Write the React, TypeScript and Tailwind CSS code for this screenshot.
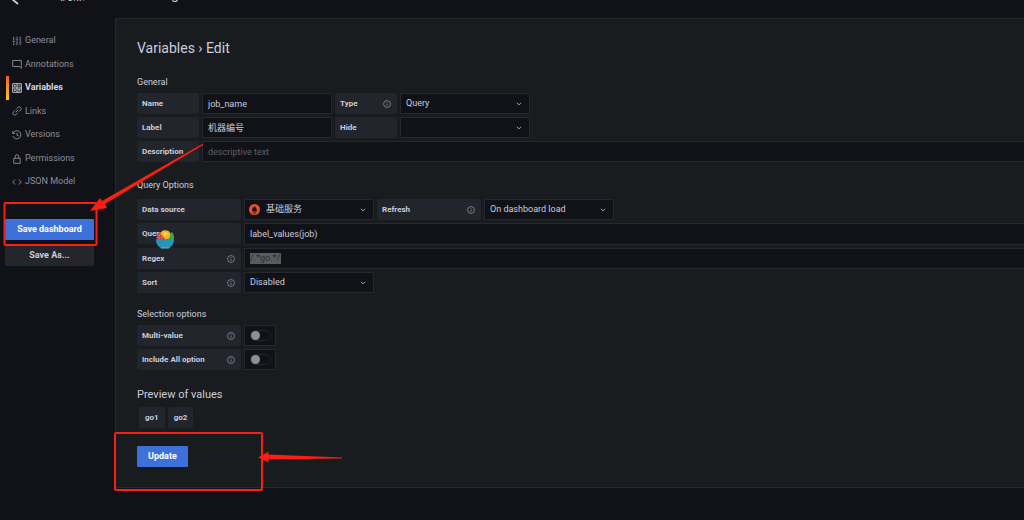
import React, { useId, useState } from "react";

function Info() {
  return (
    <svg viewBox="0 0 10 10" className="size-2 shrink-0" fill="none" stroke="#8e8e99" strokeWidth="1">
      <circle cx="5" cy="5" r="4.3" />
      <path d="M5 4.4v3M5 2.5v1" />
    </svg>
  );
}

function Label({ text, htmlFor, info = false, wide = false }: { text: string; htmlFor: string; info?: boolean; wide?: boolean }) {
  return (
    <label
      htmlFor={htmlFor}
      className={`flex h-[21px] shrink-0 items-center justify-between rounded-[2px] bg-[#22252b] pr-[6px] pl-[5px] text-[8px] font-bold whitespace-nowrap text-[#ccccdc] ${wide ? "w-[104px]" : "w-[62px]"}`}
    >
      {text}
      {info && <Info />}
    </label>
  );
}

function TextRow({ label, value, placeholder, info, wide, full, selected, tall }: {
  label: string; value?: string; placeholder?: string; info?: boolean; wide?: boolean; full?: boolean; selected?: boolean; tall?: boolean;
}) {
  const id = useId();
  return (
    <div className={`flex gap-[3px] ${full ? "min-w-0 flex-1" : ""}`}>
      <Label text={label} htmlFor={id} info={info} wide={wide} />
      {selected ? (
        <div className="flex h-[21px] min-w-0 flex-1 items-center border border-r-0 border-[#26282d] bg-[#111217] px-[5px]">
          <input id={id} defaultValue={value} className="h-[11px] w-[31px] bg-[#5b5b5b] text-[9px] text-[#2d2e30] outline-none" />
        </div>
      ) : (
        <input
          id={id}
          defaultValue={value}
          placeholder={placeholder}
          className={`border border-[#26282d] bg-[#111217] px-[5px] text-[9px] text-[#ccccdc] outline-none placeholder:text-[#5f6067] ${full ? "min-w-0 flex-1 border-r-0" : "w-[130px] rounded-[1px]"} ${tall ? "h-[22px]" : "h-[21px]"}`}
        />
      )}
    </div>
  );
}

function Flame() {
  return (
    <svg viewBox="0 0 22 22" className="pointer-events-none absolute top-[5px] left-[5px] size-[11px]">
      <circle cx="11" cy="11" r="11" fill="#e6522c" />
      <path fill="#15161a" d="M11 2.5c.8 1.8 0 3 1 4.500 1-.8.8-1.600.8-2.200 1.600 2 1.400 3.600 2.500 5.200.7 1.200.4 2.700-.3 4H7c-.8-1.400-1-2.600-.4-4 .8-1.400.6-2.700 1.200-4 .2 1 .4 1.700 1 2.200C9.800 6.400 9.800 4.300 11 2.500zM6.500 15h9v1.400h-9zM8 17.400h6c-.5 1.400-1.500 2-3 2s-2.500-.6-3-2z" />
    </svg>
  );
}

function SelectRow({ label, value, info, wide, icon }: { label: string; value: string; info?: boolean; wide?: boolean; icon?: boolean }) {
  const id = useId();
  return (
    <div className="flex gap-[3px]">
      <Label text={label} htmlFor={id} info={info} wide={wide} />
      <div className="relative">
        <select
          id={id}
          defaultValue={value}
          className={`block h-[21px] w-[130px] appearance-none rounded-[1px] border border-[#26282d] bg-[#111217] pr-5 text-[9px] text-[#ccccdc] outline-none ${icon ? "pl-[21px]" : "pl-[5px]"}`}
        >
          <option value={value}>{value}</option>
        </select>
        {icon && <Flame />}
        <svg viewBox="0 0 6 4" className="pointer-events-none absolute top-[9px] right-[8px] h-1 w-1.5" fill="none" stroke="#a0a0ac">
          <path d="M.8.8 3 2.800 5.200.8" />
        </svg>
      </div>
    </div>
  );
}

function Toggle({ label }: { label: string }) {
  const id = useId();
  const [on, setOn] = useState(false);
  return (
    <div className="flex gap-[3px]">
      <Label text={label} htmlFor={id} info wide />
      <div className="flex h-[21px] w-8 items-center justify-center border border-[#26282d] bg-[#111217]">
        <input
          id={id}
          type="checkbox"
          role="switch"
          checked={on}
          onChange={() => setOn(!on)}
          className="h-[11px] w-[21px] appearance-none rounded-full border border-[#25272c] before:block before:size-[9px] before:rounded-full before:bg-[#8f8e99] checked:before:ml-2.5"
        />
      </div>
    </div>
  );
}

const navItems: { name: string; icon: React.ReactNode }[] = [
  { name: "General", icon: <path d="M2.500 1v5M2.500 9v4M7 1v2M7 6v7M11.500 1v7M11.500 11v2M.8 7.500h3.400M5.300 4.500h3.400M9.800 9.500h3.400" /> },
  { name: "Annotations", icon: <path d="M1 2h12v11l-2.700-2.500H1z" /> },
  { name: "Variables", icon: <path d="M1 1h12v12H1zM7 1v12M1 7h12M2.800 4h2.500M4 2.800v2.500M8.800 4h2.500M2.900 9l2.200 2.200M5.100 9l-2.200 2.200M8.800 9h2.500M8.800 11h2.500" /> },
  { name: "Links", icon: <path d="M5.300 8.700 8.700 5.300M6 4.200 8.300 2a2.600 2.600 0 0 1 3.700 3.700L9.800 8M4.200 6 2 8.300A2.600 2.600 0 0 0 5.700 12L8 9.800" /> },
  { name: "Versions", icon: <path d="M1 1.500v3.300h3.300M1.500 4.500A5.700 5.700 0 1 1 1.300 8.500M7 4v3.300l2.500 1.200" /> },
  { name: "Permissions", icon: <path d="M2.500 6h9v7h-9zM4.500 6V3.500a2.500 2.500 0 0 1 5 0V6" /> },
  { name: "JSON Model", icon: <path d="M4.500 3.500 1 7l3.500 3.500M9.500 3.500 13 7l-3.500 3.500" /> },
];

function FruitBowl() {
  return (
    <svg viewBox="0 0 36 38" className="pointer-events-none absolute top-[7px] left-[19px] h-[19px] w-[18px]">
      <path d="M24 20V10l8-6c4 5 5 11 3 17z" fill="#45a545" />
      <path d="M2 20C-1 12 3 5 9 4l12 16z" fill="#c04a4c" />
      <path d="M9 8C10 2 15-1 20 1c6-1 9 4 8 9 0 5-3 9-8 10z" fill="#f8b51d" />
      <path d="M14 8 19 4l5 4-4 5z" fill="#ffd24c" />
      <path d="m6 10 2 2M10 14l2 2M5 16h2" stroke="#efb7a0" strokeWidth="1.500" fill="none" />
      <path d="M0 19h36c0 9-5 14-10 17H10C4 33 0 28 0 19z" fill="#2795b7" />
      <path d="M10 35h16v2H10z" fill="#69bdd1" />
    </svg>
  );
}

export default function App() {
  return (
    <div className="relative min-h-screen overflow-hidden bg-[#111217] font-['Roboto','Noto_Sans_CJK_SC',sans-serif] text-[#ccccdc]">
      <header className="relative h-[18px] overflow-hidden">
        <svg viewBox="0 0 12 12" className="absolute -top-[7px] left-[9px] size-3" fill="none" stroke="#ccccdc" strokeWidth="1.800">
          <path d="M9 1 3 6l6 5" />
        </svg>
        <h1 className="absolute -top-[16px] left-[58px] text-[14px] leading-5 whitespace-nowrap">机器 / Job / Settings</h1>
      </header>

      <div className="flex">
        <aside className="w-[115px] shrink-0 pt-[11px]">
          <nav className="grid h-[165px] grid-rows-7">
            {navItems.map(({ name, icon }) => {
              const active = name === "Variables";
              return (
                <a key={name} href="#" className={`flex items-center text-[9px] ${active ? "font-bold text-[#d5d5e2]" : "text-[#8e8e99]"}`}>
                  <span className={`ml-1.5 h-full w-[3px] ${active ? "bg-linear-to-b from-[#f05a28] to-[#fbca0a]" : ""}`} />
                  <svg viewBox="0 0 14 14" className="mr-[3px] ml-[3px] size-[10px]" fill="none" stroke="currentColor" strokeWidth="1.300">{icon}</svg>
                  {name}
                </a>
              );
            })}
          </nav>
          <div className="mt-[25px] mr-[21px] ml-[5px] flex flex-col gap-[5px] text-[9px] font-bold">
            <button className="h-[21px] rounded-[1px] bg-[#3d71d9] text-white">Save dashboard</button>
            <button className="h-[21px] rounded-[1px] bg-[#25262b]">Save As...</button>
          </div>
        </aside>

        <main className="min-w-0 flex-1 border border-r-0 border-[#25282d] bg-[#181c1f] pt-[20px] pb-[20px] pl-[21px]">
          <h2 className="text-[14px] leading-[18px]">Variables › Edit</h2>

          <form onSubmit={(e) => e.preventDefault()}>
            <h3 className="mt-[18px] mb-[4px] text-[9px] leading-[14px]">General</h3>
            <div className="flex flex-col gap-[3px]">
              <div className="flex gap-[3px]">
                <TextRow label="Name" value="job_name" />
                <SelectRow label="Type" value="Query" info />
              </div>
              <div className="flex gap-[3px]">
                <TextRow label="Label" value="机器编号" />
                <SelectRow label="Hide" value="" />
              </div>
              <TextRow label="Description" placeholder="descriptive text" full />
            </div>

            <h3 className="mt-[16px] mb-[7px] text-[9px] leading-[14px]">Query Options</h3>
            <div className="flex flex-col gap-[3px]">
              <div className="flex gap-[3px]">
                <SelectRow label="Data source" value="基础服务" wide icon />
                <SelectRow label="Refresh" value="On dashboard load" wide info />
              </div>
              <div className="relative flex">
                <TextRow label="Query" value="label_values(job)" wide full tall />
                <FruitBowl />
              </div>
              <TextRow label="Regex" value="/.*go.*/" wide full info selected />
              <SelectRow label="Sort" value="Disabled" wide info />
            </div>

            <h3 className="mt-[14px] mb-[4px] text-[9px] leading-[14px]">Selection options</h3>
            <div className="flex flex-col gap-[3px]">
              <Toggle label="Multi-value" />
              <Toggle label="Include All option" />
            </div>

            <h3 className="mt-[17px] text-[11px] leading-4">Preview of values</h3>
            <div className="mt-[4px] ml-[2px] flex gap-[3px] text-[8px] font-bold">
              <span className="flex h-[21px] items-center rounded-[2px] bg-[#22252b] px-[6px]">go1</span>
              <span className="flex h-[21px] items-center rounded-[2px] bg-[#22252b] px-[6px]">go2</span>
            </div>
            <button className="mt-[18px] block h-[21px] rounded-[1px] bg-[#3d71d9] px-[11px] text-[9px] font-bold text-white">Update</button>
          </form>
        </main>
      </div>

      <svg width="350" height="500" viewBox="0 0 350 500" className="pointer-events-none absolute top-0 left-0" fill="none" stroke="#fb1e12" strokeWidth="2">
        <rect x="4.500" y="203" width="92" height="42" rx="1" />
        <rect x="115" y="433" width="147" height="57" rx="1" />
        <path fill="#fb1e12" stroke="none" d="M203 143.500v1.500L105 204l2 4-17 3 10-13 2 3zM342 457.500v1l-74 1 1 3-11-5 11-6-1 3z" />
      </svg>
    </div>
  );
}
